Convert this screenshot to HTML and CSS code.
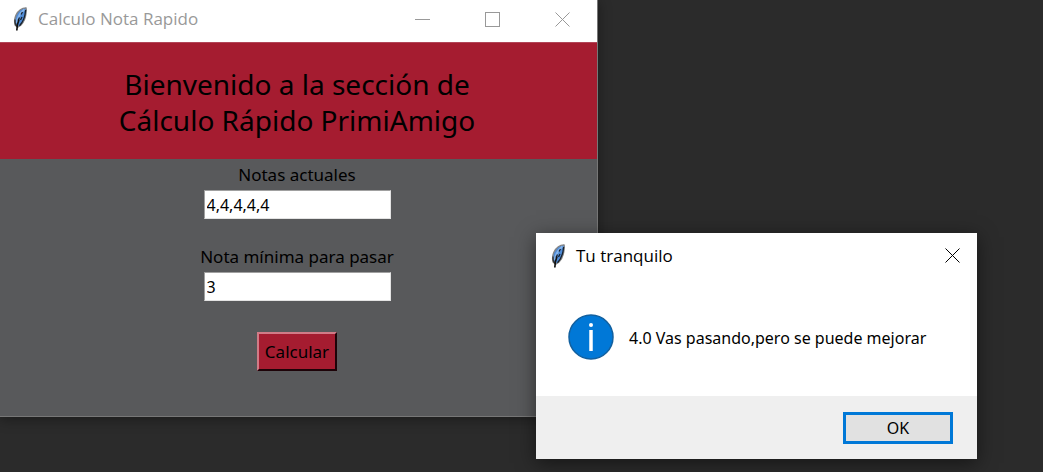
FILE: index.html
```html
<!DOCTYPE html>
<html lang="es">
<head>
<meta charset="utf-8">
<title>Calculo Nota Rapido</title>
<link rel="stylesheet" href="styles.css">
</head>
<body>
<svg class="defs" aria-hidden="true">
  <symbol id="feather" viewBox="0 0 16 24">
    <path d="M14 .8C10 .8 6 4 4 8C2.400 11.500 2.200 14.500 3 18L5.500 20.500L9 18C12 15 13.600 10.500 14 6.500C14.300 4 14.600 2 14 .8Z" fill="#4f8bd6" stroke="#858585" stroke-width="1.300"/>
    <path d="M12.500 2.500C8.500 5.500 5.500 10.500 4.800 16" fill="none" stroke="#86b5ec" stroke-width="2"/>
    <path d="M13.600 3C13.200 9.500 11 15 7.500 18.800M10.500 5L9 7.500M7.500 10.500L6 13.500M10 10L8.500 13" fill="none" stroke="#17202c" stroke-width="1.300"/>
    <path d="M3 12.500C2.700 15 3.200 17.500 5 19.500" fill="none" stroke="#333" stroke-width="1.200"/>
    <path d="M7 12.500C5.500 16 5 18.500 4.800 23.500" fill="none" stroke="#111" stroke-width="1.700"/>
  </symbol>
  <symbol id="close" viewBox="0 0 15 15">
    <path d="M.5 .5L14.500 14.500M14.500 .5L.5 14.500" fill="none" stroke="currentColor"/>
  </symbol>
</svg>
<main class="desktop">
  <section class="window app">
    <header class="titlebar inactive">
      <svg class="feather"><use href="#feather"/></svg>
      <span class="title">Calculo Nota Rapido</span>
      <button class="control" aria-label="Minimizar"><svg viewBox="0 0 15 15"><path d="M0 7.500H15" stroke="currentColor"/></svg></button>
      <button class="control" aria-label="Maximizar"><svg viewBox="0 0 15 15"><rect x=".5" y=".5" width="14" height="14" fill="none" stroke="currentColor"/></svg></button>
      <button class="control" aria-label="Cerrar"><svg><use href="#close"/></svg></button>
    </header>
    <h1 class="banner">Bienvenido a la sección de<br>Cálculo Rápido PrimiAmigo</h1>
    <form class="form">
      <div class="field">
        <label for="notas">Notas actuales</label>
        <input id="notas" type="text" value="4,4,4,4,4">
      </div>
      <div class="field">
        <label for="minima">Nota mínima para pasar</label>
        <input id="minima" type="text" value="3">
      </div>
      <button class="calculate" type="button">Calcular</button>
    </form>
  </section>
  <section class="window dialog" role="dialog" aria-labelledby="dialog-title">
    <header class="titlebar">
      <svg class="feather"><use href="#feather"/></svg>
      <span class="title" id="dialog-title">Tu tranquilo</span>
      <button class="control" aria-label="Cerrar"><svg><use href="#close"/></svg></button>
    </header>
    <div class="message">
      <svg class="info" viewBox="0 0 46 46" aria-hidden="true">
        <circle cx="23" cy="23" r="22" fill="#0078d7" stroke="#12609f" stroke-width="1.500"/>
        <path d="M23 16V37" stroke="#fff" stroke-width="3.500"/>
        <circle cx="23" cy="11" r="2" fill="#fff"/>
      </svg>
      <p>4.0 Vas pasando,pero se puede mejorar</p>
    </div>
    <footer class="actions"><button class="ok" type="button">OK</button></footer>
  </section>
</main>
</body>
</html>
```
FILE: styles.css
```css
* { box-sizing: border-box; }
body { margin: 0; background: #2b2b2b; color: #000; font: 17px/24px "Noto Sans", "Open Sans", sans-serif; }
button, input { font: inherit; color: inherit; }
.defs { position: absolute; width: 0; height: 0; }
.desktop { position: relative; min-height: 100vh; overflow: hidden; }
.window { position: absolute; display: flex; flex-direction: column; }
.app { left: 0; top: 0; width: 598px; background: #58595b; border: solid #777; border-width: 0 1px 1px 0; box-shadow: 0 2px 12px rgba(0, 0, 0, .4); }
.dialog { left: 536px; top: 233px; width: 441px; background: #fff; box-shadow: 0 4px 18px rgba(0, 0, 0, .5); }
.titlebar { display: flex; align-items: center; height: 42px; padding: 0 0 4px 12px; background: #fff; font-family: "Open Sans", sans-serif; }
.inactive { color: #999; }
.dialog .titlebar { height: 45px; padding: 0 0 0 14px; }
.feather { width: 16px; height: 24px; margin-right: 10px; }
.title { flex: 1; }
.control { display: grid; place-items: center; width: 70px; height: 38px; padding: 0; border: 0; background: none; }
.dialog .control { width: 50px; }
.control svg { width: 15px; height: 15px; }
.banner { margin: 0; padding: 23px 3px 21px 0; background: #a51c30; border-top: 1px solid #b24557; font-size: 28px; line-height: 36px; font-weight: 400; text-align: center; }
.form { display: flex; flex-direction: column; align-items: center; gap: 26px; padding: 4px 3px 45px 0; }
.field { display: flex; flex-direction: column; align-items: center; gap: 3px; }
.field input { width: 187px; height: 29px; padding: 0 2px; border: 1px solid #a0a0a0; border-right-color: #e3e3e3; border-bottom-color: #e3e3e3; border-radius: 0; background: #fff; font-size: 16px; }
.calculate { height: 39px; margin-top: 5px; padding: 0 6px; border: 2px solid; border-color: #d17b87 #1d0308 #1d0308 #d17b87; background: #a51c30; }
.message { display: flex; align-items: center; gap: 15px; height: 118px; padding: 0 32px; }
.message p { margin: 0; padding-top: 2px; font-size: 16px; white-space: nowrap; }
.info { flex: none; width: 46px; height: 46px; }
.actions { display: flex; justify-content: flex-end; padding: 16px 24px 15px; background: #efefef; }
.ok { width: 110px; height: 32px; padding: 0; border: 3px solid #0078d7; background: #e1e1e1; font-size: 16px; }
```
